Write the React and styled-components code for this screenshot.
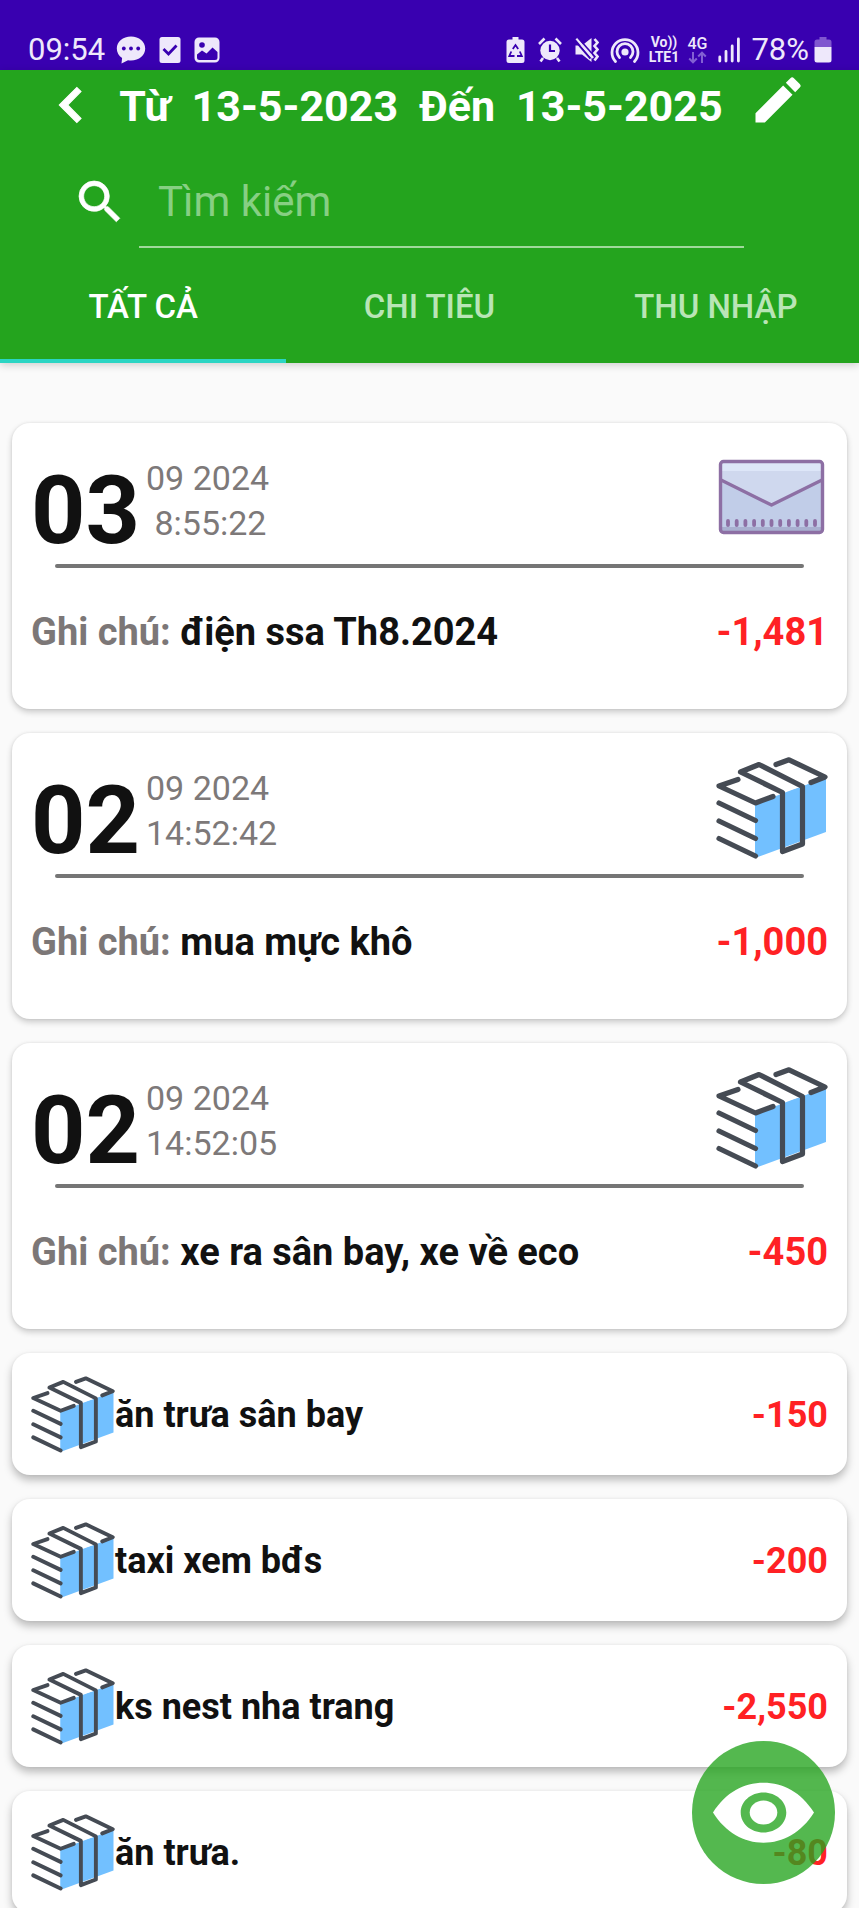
import React, { useState } from "react";
import styled, { createGlobalStyle } from "styled-components";

const GlobalStyle = createGlobalStyle`
  *, *::before, *::after { box-sizing: border-box; }
  body {
    margin: 0;
    background: #fafafa;
    font-family: Roboto, "Noto Sans", sans-serif;
    color: #111;
  }
  button, input { font-family: inherit; }
`;

const Screen = styled.div`
  display: flex;
  flex-direction: column;
  height: 100vh;
  overflow: hidden;
`;

/* ---------- status bar ---------- */

const StatusBar = styled.div`
  display: flex;
  align-items: flex-end;
  justify-content: space-between;
  flex: none;
  height: 70px;
  padding: 0 27px 3px 28px;
  background: #3900b0;
  color: #eee8fb;
  font-size: 31px;
  line-height: 34px;
`;

const StatusGroup = styled.div`
  display: flex;
  align-items: center;
  gap: ${(p) => p.$gap}px;
  height: 34px;
`;

const StatusTime = styled.span`
  width: 75px;
`;

const Stack = styled.span`
  display: flex;
  flex-direction: column;
  align-items: center;
  width: ${(p) => p.$width}px;
  font-size: 14px;
  font-weight: 700;
  line-height: 15px;
`;

const NetworkType = styled.span`
  font-size: 16px;
  font-weight: 500;
  line-height: 15px;
`;

/* ---------- header ---------- */

const Header = styled.header`
  position: relative;
  flex: none;
  background: #24a41e;
  color: #fff;
  box-shadow: 0 2px 8px rgba(0, 0, 0, 0.18);
`;

const TitleRow = styled.div`
  display: flex;
  align-items: center;
  height: 72px;
  padding: 0 39px 0 36px;
`;

const IconButton = styled.button`
  display: flex;
  align-items: center;
  justify-content: center;
  align-self: flex-start;
  flex: none;
  width: ${(p) => p.$width}px;
  padding: 0;
  border: 0;
  background: none;
  color: inherit;
`;

const Title = styled.h1`
  display: flex;
  justify-content: center;
  flex: 1;
  gap: 21px;
  margin: 0;
  font-size: 43px;
  font-weight: 700;
  line-height: 48px;
  white-space: nowrap;
`;

const SearchRow = styled.label`
  display: flex;
  align-items: center;
  gap: 11px;
  padding: 14px 115px 4px 72px;
`;

const SearchInput = styled.input`
  flex: 1;
  min-width: 0;
  height: 92px;
  padding: 0 19px;
  border: 0;
  border-bottom: 2px solid #a0d99c;
  outline: 0;
  background: none;
  color: #fff;
  font-size: 42px;
  &::placeholder { color: #87cf83; opacity: 1; }
`;

const Tabs = styled.div`
  display: flex;
`;

const Tab = styled.button`
  flex: 1;
  height: 111px;
  padding: 0 0 2px;
  border: 0;
  background: none;
  box-shadow: ${(p) => (p.$active ? "inset 0 -4px #2bd5c3" : "none")};
  color: ${(p) => (p.$active ? "#fff" : "#b9e5b6")};
  font-size: 33px;
  font-weight: 500;
`;

/* ---------- list ---------- */

const List = styled.ul`
  display: flex;
  flex-direction: column;
  gap: 24px;
  margin: 0;
  padding: 60px 12px 24px;
  list-style: none;
`;

const Card = styled.li`
  flex: none;
  padding: 8px 19px 14px;
  border-radius: 18px;
  background: #fff;
  box-shadow: 0 3px 6px rgba(0, 0, 0, 0.2), 0 0 3px rgba(0, 0, 0, 0.08);
`;

const CompactCard = styled(Card)`
  display: flex;
  align-items: center;
  height: 122px;
  padding: 0 19px;
  box-shadow: 0 5px 9px rgba(0, 0, 0, 0.26), 0 0 3px rgba(0, 0, 0, 0.06);
`;

const CardHead = styled.div`
  display: flex;
  align-items: flex-end;
  gap: 6px;
  height: 133px;
`;

const Day = styled.span`
  font-size: 95px;
  font-weight: 700;
  line-height: 106px;
`;

const DateBlock = styled.div`
  flex: 1;
  padding-bottom: 18px;
  color: #7d7979;
  font-size: 34px;
  line-height: 45px;
  white-space: pre;
`;

const IconSlot = styled.div`
  display: flex;
  padding-bottom: 15px;
`;

const Divider = styled.hr`
  height: 4px;
  margin: 0 24px;
  border: 0;
  border-radius: 2px;
  background: #757575;
`;

const CardFoot = styled.div`
  display: flex;
  align-items: center;
  justify-content: space-between;
  height: 127px;
  font-size: 38px;
  font-weight: 700;
`;

const Muted = styled.span`
  color: #7c7777;
`;

const Amount = styled.span`
  color: #ff2124;
  font-weight: 700;
`;

const CompactText = styled.span`
  flex: 1;
  font-weight: 700;
`;

const CompactBody = styled.div`
  display: flex;
  flex: 1;
  padding-top: 2px;
  font-size: 36px;
`;

const Fab = styled.button`
  position: fixed;
  right: 24px;
  bottom: 24px;
  width: 143px;
  height: 143px;
  padding: 0;
  border: 0;
  border-radius: 50%;
  background: rgba(36, 164, 30, 0.78);
`;

/* ---------- drawings ---------- */

const StackIcon = ({ width = 112, height = 102 }) => (
  <svg width={width} height={height} viewBox="0 0 112 102" aria-hidden="true">
    <path d="M39 47 110 20V75L39 101Z" fill="#72c0ff" />
    <path d="M39 46 66 35.500 86 29.500 109 20 72 3 43 7 24 15 2.500 28.500Z" fill="#fff" />
    <g fill="none" stroke="#454b54" strokeWidth="5.200" strokeLinecap="round" strokeLinejoin="round">
      <path d="M22 22.500 3 29 39.500 46 57 39.500" />
      <path d="M24.500 15 43 7.500 86.500 29.500V87L66.500 94.500V35.500Z" />
      <path d="M60 7.500 73 2.800 109 20 95 25.500" />
      <path d="M3 46 39.500 63.500M3 64 39.500 81.500M3 81.500 39.500 99" />
    </g>
  </svg>
);

const EnvelopeIcon = () => (
  <svg width="112" height="102" viewBox="0 0 112 102" aria-hidden="true">
    <rect x="4.500" y="14.500" width="102" height="71" rx="3" fill="#c1cde8" />
    <path d="M5 32V15H106V32L55.500 58Z" fill="#cfd8ee" />
    <path d="M5 15H106V24H5Z" fill="#dde6f8" />
    <path d="M5 80H106V85H5Z" fill="#a9b0d0" />
    <path
      d="M12 74v4M20.700 74v4M29.400 74v4M38.100 74v4M46.800 74v4M55.500 74v4M64.200 74v4M72.900 74v4M81.600 74v4M90.300 74v4M99 74v4"
      stroke="#8d6fa4"
      strokeWidth="3.800"
      strokeLinecap="round"
    />
    <g fill="none" stroke="#8d6fa4" strokeWidth="3.400" strokeLinejoin="round">
      <rect x="4.500" y="14.500" width="102" height="71" rx="3" />
      <path d="M5 33 55.500 58 106 33" />
    </g>
  </svg>
);

const BackIcon = () => (
  <svg width="70" height="70" viewBox="0 0 24 24" fill="currentColor" aria-hidden="true">
    <path d="M15.410 16.590 10.830 12l4.580-4.590L14 6l-6 6 6 6z" stroke="currentColor" strokeWidth=".4" />
  </svg>
);

const EditIcon = () => (
  <svg width="60" height="60" viewBox="0 0 24 24" fill="currentColor" aria-hidden="true">
    <path d="M3 17.250V21h3.750L17.810 9.940l-3.750-3.750L3 17.250zM20.710 7.040a1 1 0 0 0 0-1.410l-2.340-2.340a1 1 0 0 0-1.410 0l-1.830 1.830 3.750 3.750 1.830-1.830z" />
  </svg>
);

const SearchIcon = () => (
  <svg width="56" height="56" viewBox="0 0 24 24" fill="currentColor" aria-hidden="true">
    <path
      d="M15.500 14h-.79l-.28-.27A6.470 6.470 0 0 0 16 9.500 6.500 6.500 0 1 0 9.500 16c1.610 0 3.090-.59 4.230-1.570l.27.28v.79l5 4.990L20.490 19l-4.990-5zm-6 0C7.010 14 5 11.990 5 9.500S7.010 5 9.500 5 14 7.010 14 9.500 11.990 14 9.500 14z"
      stroke="currentColor"
      strokeWidth=".3"
    />
  </svg>
);

const EyeIcon = () => (
  <svg width="143" height="143" viewBox="0 0 143 143" aria-hidden="true">
    <path
      fillRule="evenodd"
      fill="#fff"
      d="M21 71.500C34 51 52 41.700 71.500 41.700S109 51 122 71.500C109 92 91 101.700 71.500 101.700S34 92 21 71.500ZM71.500 51.500c-12.700 0-22.800 9-22.800 20s10.100 20 22.800 20 22.800-9 22.800-20-10.100-20-22.800-20Z"
    />
    <ellipse cx="71.500" cy="71.500" rx="13.800" ry="12" fill="#fff" />
  </svg>
);

const ChatIcon = () => (
  <svg width="30" height="30" viewBox="0 0 30 30" aria-hidden="true">
    <path d="M15 1.500C6.800 1.500.8 6.700.8 13.500c0 4 2 7.300 5.300 9.500L5.500 28.500l6.500-3.300c1 .2 2 .3 3 .3 8.200 0 14.200-5.200 14.200-12S23.200 1.500 15 1.500Z" fill="currentColor" />
    <g fill="#3900b0">
      <circle cx="7.800" cy="13.500" r="1.900" />
      <circle cx="15" cy="13.500" r="1.900" />
      <circle cx="22.200" cy="13.500" r="1.900" />
    </g>
  </svg>
);

const TaskIcon = () => (
  <svg width="22" height="28" viewBox="0 0 22 28" aria-hidden="true">
    <rect x=".5" y="1" width="21" height="26" rx="2.500" fill="currentColor" />
    <path d="M4.500 13 9.500 18 17.500 9.500" fill="none" stroke="#3900b0" strokeWidth="2.800" />
  </svg>
);

const PhotoIcon = () => (
  <svg width="26" height="28" viewBox="0 0 26 28" aria-hidden="true">
    <rect x="1.500" y="2.500" width="23" height="23" rx="3.500" fill="currentColor" stroke="currentColor" strokeWidth="2" />
    <circle cx="8" cy="9" r="2.800" fill="#3900b0" />
    <path d="M3 18.500 8 14.500 12.500 17.500 18.500 11.500 23.500 16V21.500Q23.500 24 21 24H5.500Q3 24 3 21.500Z" fill="#3900b0" />
  </svg>
);

const BatteryCareIcon = () => (
  <svg width="19" height="28" viewBox="0 0 19 28" aria-hidden="true">
    <path d="M6.500 1h6v2.500H16Q18.500 3.500 18.500 6V24.500Q18.500 27 16 27H3Q.5 27 .5 24.500V6Q.5 3.500 3 3.500H6.500Z" fill="currentColor" />
    <path d="M6.800 13 9.500 9l2.700 4M13.800 15.500l2 4.500H11M8.500 20H3.300l2-4.500" fill="none" stroke="#3900b0" strokeWidth="1.800" />
  </svg>
);

const AlarmIcon = () => (
  <svg width="24" height="28" viewBox="0 0 24 28" aria-hidden="true">
    <circle cx="12" cy="14.500" r="9.700" fill="currentColor" />
    <path d="M1 8 6.500 2.500M23 8 17.500 2.500M5 22l-2.500 3.500M19 22l2.500 3.500" stroke="currentColor" strokeWidth="2.600" />
    <path d="M12 8.500V15h5" fill="none" stroke="#3900b0" strokeWidth="2.200" />
  </svg>
);

const MuteIcon = () => (
  <svg width="24" height="28" viewBox="0 0 24 28" aria-hidden="true">
    <path d="M.5 9.500H7L16.500 2V26L7 18.500H.5Z" fill="currentColor" />
    <path d="M0 4.500 15.500 22.500" stroke="#3900b0" strokeWidth="2" />
    <path d="M1.500 2.500 18 22" stroke="currentColor" strokeWidth="2.600" />
    <path d="M2.800 1.500 17 17.500" stroke="#3900b0" strokeWidth="1.600" />
    <path d="M19.500 3 22.500 6.500 19.500 10 22.500 13.500 19.500 17 22.500 20.500 19.500 24.500" fill="none" stroke="currentColor" strokeWidth="2.600" />
  </svg>
);

const HotspotIcon = () => (
  <svg width="30" height="28" viewBox="0 0 30 28" aria-hidden="true">
    <circle cx="15" cy="16" r="3.600" fill="currentColor" />
    <g fill="none" stroke="currentColor" strokeWidth="2.800" strokeLinecap="round">
      <path d="M5.500 25.500A13 13 0 1 1 24.500 25.500" />
      <path d="M9.500 21.500A8 8 0 1 1 20.500 21.500" />
    </g>
  </svg>
);

const DataArrows = () => (
  <svg width="19" height="13" viewBox="0 0 19 13" aria-hidden="true">
    <path d="M5 1v10M1.200 7.500 5 11.300 8.800 7.500M14 12V2M10.200 5.500 14 1.700 17.800 5.500" fill="none" stroke="#8360d3" strokeWidth="2" />
  </svg>
);

const SignalIcon = () => (
  <svg width="22" height="28" viewBox="0 0 22 28" aria-hidden="true">
    <path d="M1.800 21v4M8 15.500v9.500M14.200 10v15M20.400 3v22" stroke="currentColor" strokeWidth="2.800" strokeLinecap="round" />
  </svg>
);

const BatteryIcon = () => (
  <svg width="18" height="28" viewBox="0 0 18 28" aria-hidden="true">
    <path d="M5.500 1h7v2.500H15Q17.500 3.500 17.500 6V11H.5V6Q.5 3.500 3 3.500H5.500Z" fill="#8057cf" />
    <path d="M.5 11H17.500V24Q17.500 26.500 15 26.500H3Q.5 26.500 .5 24Z" fill="currentColor" />
  </svg>
);

/* ---------- data ---------- */

const TABS = ["TẤT CẢ", "CHI TIÊU", "THU NHẬP"];

const ENTRIES = [
  { day: "03", month: "09 2024", time: " 8:55:22", note: "điện ssa Th8.2024", amount: "-1,481", icon: "envelope" },
  { day: "02", month: "09 2024", time: "14:52:42", note: "mua mực khô", amount: "-1,000", icon: "stack" },
  { day: "02", month: "09 2024", time: "14:52:05", note: "xe ra sân bay, xe về eco", amount: "-450", icon: "stack" },
];

const COMPACT = [
  { note: "ăn trưa sân bay", amount: "-150" },
  { note: "taxi xem bđs", amount: "-200" },
  { note: "ks nest nha trang", amount: "-2,550" },
  { note: "ăn trưa.", amount: "-80" },
];

function Entry({ day, month, time, note, amount, icon }) {
  return (
    <Card>
      <CardHead>
        <Day>{day}</Day>
        <DateBlock>
          <div>{month}</div>
          <div>{time}</div>
        </DateBlock>
        <IconSlot>{icon === "envelope" ? <EnvelopeIcon /> : <StackIcon />}</IconSlot>
      </CardHead>
      <Divider />
      <CardFoot>
        <span>
          <Muted>Ghi chú:</Muted> {note}
        </span>
        <Amount>{amount}</Amount>
      </CardFoot>
    </Card>
  );
}

export default function App() {
  const [tab, setTab] = useState(0);
  return (
    <Screen>
      <GlobalStyle />
      <StatusBar>
        <StatusGroup $gap={13}>
          <StatusTime>09:54</StatusTime>
          <ChatIcon />
          <TaskIcon />
          <PhotoIcon />
        </StatusGroup>
        <StatusGroup $gap={11}>
          <StatusGroup $gap={13}>
            <BatteryCareIcon />
            <AlarmIcon />
            <MuteIcon />
          </StatusGroup>
          <StatusGroup $gap={8}>
            <HotspotIcon />
            <Stack $width={31}>
              <span>Vo))</span>
              <span>LTE1</span>
            </Stack>
            <Stack $width={20}>
              <NetworkType>4G</NetworkType>
              <DataArrows />
            </Stack>
          </StatusGroup>
          <SignalIcon />
          <StatusGroup $gap={5}>
            <span>78%</span>
            <BatteryIcon />
          </StatusGroup>
        </StatusGroup>
      </StatusBar>

      <Header>
        <TitleRow>
          <IconButton $width={70} aria-label="Quay lại">
            <BackIcon />
          </IconButton>
          <Title>
            <span>Từ</span>
            <span>13-5-2023</span>
            <span>Đến</span>
            <span>13-5-2025</span>
          </Title>
          <IconButton $width={84} aria-label="Sửa">
            <EditIcon />
          </IconButton>
        </TitleRow>
        <SearchRow>
          <SearchIcon />
          <SearchInput type="text" placeholder="Tìm kiếm" aria-label="Tìm kiếm" />
        </SearchRow>
        <Tabs role="tablist">
          {TABS.map((name, i) => (
            <Tab key={name} role="tab" aria-selected={i === tab} $active={i === tab} onClick={() => setTab(i)}>
              {name}
            </Tab>
          ))}
        </Tabs>
      </Header>

      <List>
        {ENTRIES.map((e) => (
          <Entry key={e.time} {...e} />
        ))}
        {COMPACT.map((c) => (
          <CompactCard key={c.note}>
            <StackIcon width={84} height={77} />
            <CompactBody>
              <CompactText>{c.note}</CompactText>
              <Amount>{c.amount}</Amount>
            </CompactBody>
          </CompactCard>
        ))}
      </List>

      <Fab aria-label="Xem">
        <EyeIcon />
      </Fab>
    </Screen>
  );
}
